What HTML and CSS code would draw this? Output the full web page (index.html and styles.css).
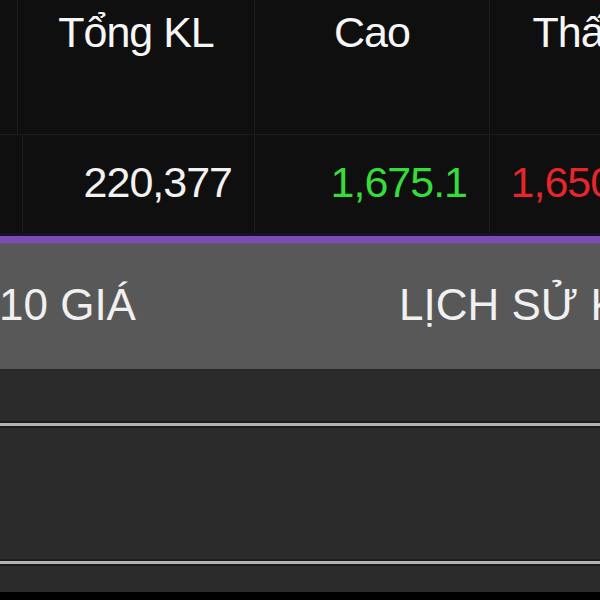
FILE: index.html
```html
<!DOCTYPE html>
<html lang="vi">
<head>
    <meta charset="UTF-8">
    <meta name="viewport" content="width=device-width, initial-scale=1.0">
    <title>Bảng giá</title>
    <link rel="stylesheet" href="styles.css">
</head>
<body>

<div class="screen">
    <!-- Price board -->
    <div class="board">
        <div class="row row-head">
            <div class="cell"></div>
            <div class="cell">Tổng KL</div>
            <div class="cell">Cao</div>
            <div class="cell">Thấp</div>
            <div class="cell">Mở cửa</div>
        </div>
        <div class="row row-data">
            <div class="cell"></div>
            <div class="cell">220,377</div>
            <div class="cell up">1,675.1</div>
            <div class="cell down">1,650.0</div>
            <div class="cell">1,660.2</div>
        </div>
    </div>

    <div class="accent"></div>

    <!-- Tabs -->
    <div class="tabs">
        <div class="tab tab-prices">10 GIÁ</div>
        <div class="tab tab-history">LỊCH SỬ KHỚP</div>
    </div>

    <!-- Tab content -->
    <div class="panel">
        <div class="panel-top"></div>
        <div class="rule"></div>
        <div class="panel-body"></div>
        <div class="rule"></div>
        <div class="panel-bottom"></div>
    </div>
</div>

</body>
</html>
```

FILE: styles.css
```css
/* Basic Reset */
* {
    box-sizing: border-box;
    margin: 0;
    padding: 0;
}

body {
    background: #000;
    font-family: "Liberation Sans", Arial, sans-serif;
    color: #f2f2f2;
    overflow: hidden;
}

.screen {
    width: 600px;
    height: 600px;
    overflow: hidden;
}

/* Price board */
.board {
    width: 900px;
    background-color: #0f0f0f;
}

.row {
    display: grid;
    grid-template-columns: 18px 237px 235px 180px 230px;
    font-size: 43px;
    line-height: 43px;
    letter-spacing: -1px;
}

.cell {
    border-right: 1px solid #1c1c1c;
    white-space: nowrap;
}

.row-head {
    height: 135px;
    border-bottom: 1px solid #1c1c1c;
}

.row-head .cell {
    padding-top: 11px;
    text-align: center;
    color: #f6f6f6;
}

.row-data {
    height: 98px;
}

.row-data .cell {
    padding-top: 26px;
    padding-right: 22px;
    text-align: right;
}

.up { color: #36dc3a; }
.down { color: #e5262b; }

/* Purple line under the board */
.accent {
    height: 12px;
    border-top: 3px solid #1b0e28;
    border-bottom: 2px solid #5f566a;
    background-color: #7a4db4;
}

/* Tabs */
.tabs {
    display: flex;
    height: 124px;
    background-color: #585858;
    font-size: 44px;
    line-height: 44px;
    white-space: nowrap;
    overflow: hidden;
}

.tab {
    padding-top: 38px;
    color: #f0f0f0;
}

.tab-prices {
    flex: 0 0 auto;
    margin-left: -1px;
}

.tab-history {
    margin-left: 263px;
}

/* Tab content */
.panel {
    background-color: #2b2b2b;
    border-top: 1px solid #262626;
}

.panel-top {
    height: 51px;
}

.panel-body {
    height: 131px;
}

.panel-bottom {
    height: 36px;
    border-bottom: 10px solid #000;
}

.rule {
    height: 7px;
    border-top: 2px solid #1c1c1c;
    border-bottom: 2px solid #1c1c1c;
    background-color: #b2b2b2;
}
```
